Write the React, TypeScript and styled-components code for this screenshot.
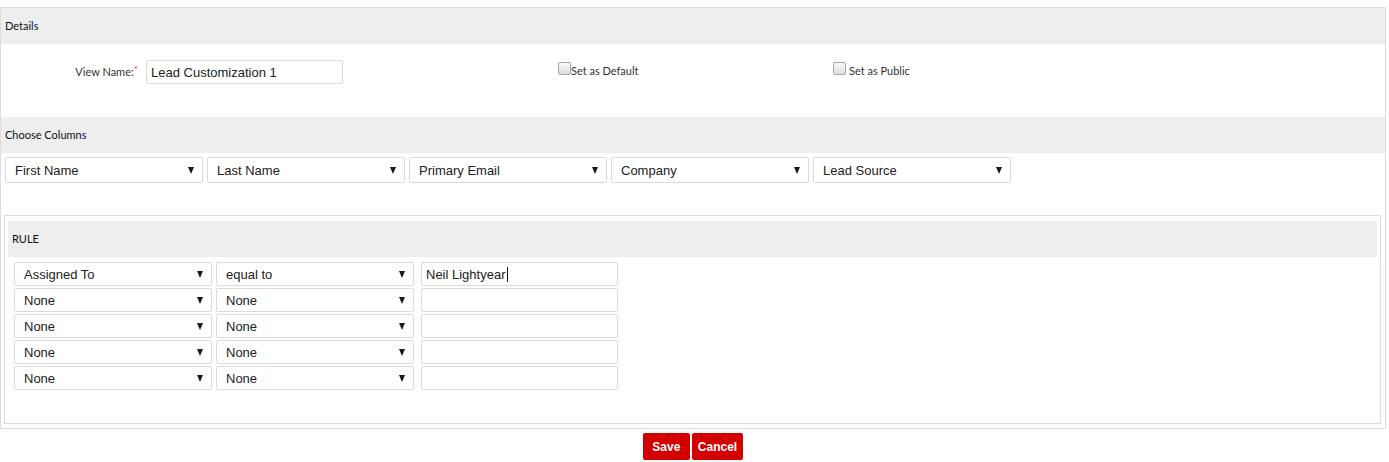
import React from "react";
import styled, { createGlobalStyle } from "styled-components";

const Global = createGlobalStyle`
  html, body { margin: 0; padding: 0; background: #fff; }
  body { font-family: Lato, "Open Sans", sans-serif; color: #333; }
  * { box-sizing: border-box; }
`;

const Page = styled.div`
  padding-top: 7px;
`;

const Panel = styled.div`
  width: 1386px;
  border: 1px solid #dddddd;
  background: #fff;
`;

const Band = styled.div`
  height: 36px;
  line-height: 36px;
  background: #eeeeee;
  padding-left: 4px;
  font-family: Lato, sans-serif;
  font-size: 11px;
  color: #111;
`;

const DetailsBody = styled.div`
  height: 73px;
  padding-top: 16px;
  display: grid;
  grid-template-columns: 145px 412px 275px 1fr;
  align-items: start;
`;

const FieldLabel = styled.label`
  padding-right: 8px;
  text-align: right;
  font-family: Lato, sans-serif;
  font-size: 11px;
  color: #333;
  line-height: 24px;
`;

const Req = styled.span`
  color: #e03030;
  position: relative;
  top: -3px;
  font-size: 10px;
`;

const TextField = styled.div<{ $h?: number }>`
  width: 197px;
  height: ${(p) => p.$h ?? 24}px;
  border: 1px solid #d7dce3;
  border-radius: 2px;
  padding-left: 4px;
  font-family: "Liberation Sans", Arial, sans-serif;
  font-size: 13px;
  color: #222;
  display: flex;
  align-items: center;
  white-space: nowrap;
`;

const Caret = styled.span`
  display: inline-block;
  width: 1px;
  height: 15px;
  background: #111;
  margin-left: 1px;
`;

const CheckLabel = styled.label<{ $gap: number }>`
  display: flex;
  align-items: center;
  gap: ${(p) => p.$gap}px;
  margin-top: 2px;
  font-family: Lato, sans-serif;
  font-size: 11px;
  color: #333;
  height: 16px;
`;

const CheckBox = styled.span`
  display: inline-block;
  width: 13px;
  height: 13px;
  border: 1px solid #a6a6a6;
  border-radius: 2px;
  background: linear-gradient(#fafafa, #dcdcdc);
  margin-top: -4px;
`;

const ColumnsRow = styled.div`
  display: flex;
  gap: 4px;
  padding: 4px 5px 32px 4px;
`;

const SelectBox = styled.div<{ $h: number }>`
  width: 198px;
  height: ${(p) => p.$h}px;
  border: 1px solid #d7dce3;
  border-radius: 2px;
  padding: 0 8px 0 9px;
  display: flex;
  align-items: center;
  justify-content: space-between;
  font-family: "Liberation Sans", Arial, sans-serif;
  font-size: 13px;
  color: #222;
  background: #fff;
`;

const Arrow = styled.span`
  width: 0;
  height: 0;
  border-left: 3.5px solid transparent;
  border-right: 3.5px solid transparent;
  border-top: 7px solid #1a1a1a;
`;

const RuleBox = styled.div`
  margin: 0 4px 4px 3px;
  border: 1px solid #dddddd;
  padding: 5px 3px 33px 3px;
`;

const RuleRows = styled.div`
  display: flex;
  flex-direction: column;
  gap: 2px;
  padding: 5px 0 0 6px;
`;

const RuleRow = styled.div`
  display: flex;
  align-items: flex-start;
  gap: 4px;
`;

const ValueCell = styled.div`
  margin-left: 3px;
`;

const Actions = styled.div`
  width: 1386px;
  display: flex;
  justify-content: center;
  gap: 2px;
  padding-top: 4px;
`;

const Button = styled.button`
  height: 27px;
  min-width: 47px;
  padding: 0 6px;
  border: none;
  border-radius: 2px;
  background: #d20000;
  color: #fff;
  font-family: "Liberation Sans", Arial, sans-serif;
  font-weight: bold;
  font-size: 12px;
  cursor: pointer;
`;

const Select = ({ value, h = 26 }: { value: string; h?: number }) => (
  <SelectBox $h={h}>
    <span>{value}</span>
    <Arrow />
  </SelectBox>
);

const columns = ["First Name", "Last Name", "Primary Email", "Company", "Lead Source"];

const rules = [
  { field: "Assigned To", op: "equal to", value: "Neil Lightyear" },
  { field: "None", op: "None", value: "" },
  { field: "None", op: "None", value: "" },
  { field: "None", op: "None", value: "" },
  { field: "None", op: "None", value: "" },
];

export default function App() {
  return (
    <Page>
      <Global />
      <Panel>
        <Band>Details</Band>
        <DetailsBody>
          <FieldLabel>
            View Name:<Req>*</Req>
          </FieldLabel>
          <TextField>Lead Customization 1</TextField>
          <CheckLabel $gap={0}>
            <CheckBox />
            Set as Default
          </CheckLabel>
          <CheckLabel $gap={3}>
            <CheckBox />
            Set as Public
          </CheckLabel>
        </DetailsBody>
        <Band>Choose Columns</Band>
        <ColumnsRow>
          {columns.map((c) => (
            <Select key={c} value={c} />
          ))}
        </ColumnsRow>
        <RuleBox>
          <Band>RULE</Band>
          <RuleRows>
            {rules.map((r, i) => (
              <RuleRow key={i}>
                <Select value={r.field} h={24} />
                <Select value={r.op} h={24} />
                <ValueCell>
                  <TextField $h={24}>
                    {r.value}
                    {i === 0 && <Caret />}
                  </TextField>
                </ValueCell>
              </RuleRow>
            ))}
          </RuleRows>
        </RuleBox>
      </Panel>
      <Actions>
        <Button>Save</Button>
        <Button>Cancel</Button>
      </Actions>
    </Page>
  );
}
